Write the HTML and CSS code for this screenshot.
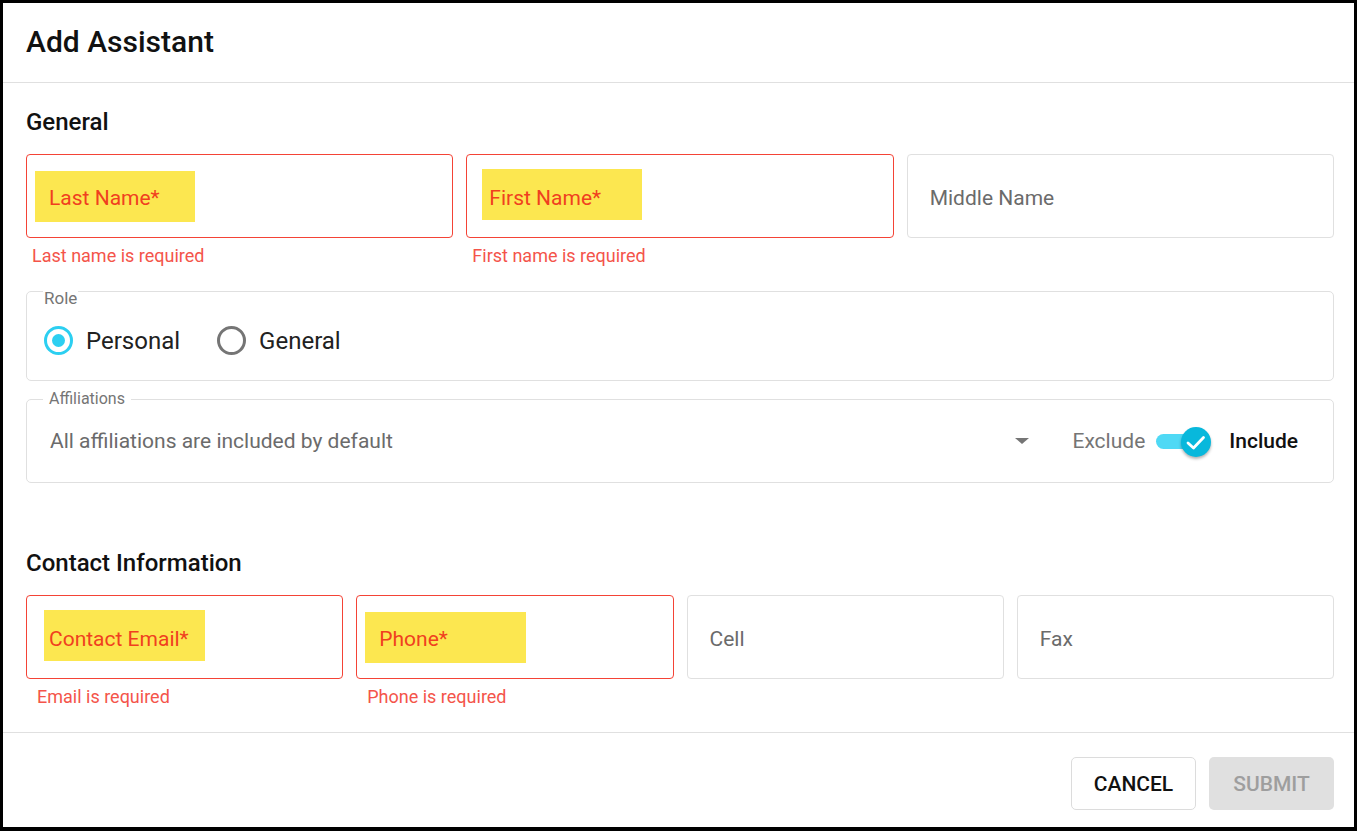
FILE: index.html
```html
<!DOCTYPE html>
<html lang="en">
<head>
<meta charset="utf-8">
<title>Add Assistant</title>
<link rel="stylesheet" href="styles.css">
</head>
<body>
<div class="dialog">
  <header class="dialog-header">
    <h1 class="dialog-title">Add Assistant</h1>
  </header>

  <main class="dialog-body">
    <h2 class="section-title section-title--first">General</h2>
    <div class="row row--3">
      <div class="field-group">
        <div class="field field--error">
          <span class="hl hl--a"></span>
          <span class="field-label">Last Name*</span>
        </div>
        <div class="field-error">Last name is required</div>
      </div>
      <div class="field-group">
        <div class="field field--error">
          <span class="hl hl--b"></span>
          <span class="field-label">First Name*</span>
        </div>
        <div class="field-error">First name is required</div>
      </div>
      <div class="field-group">
        <div class="field">
          <span class="field-label field-label--muted">Middle Name</span>
        </div>
      </div>
    </div>

    <div class="box box--role">
      <span class="box-label box-label--role">Role</span>
      <div class="radios">
        <label class="radio">
          <span class="radio-mark radio-mark--on"></span>
          <span class="radio-text">Personal</span>
        </label>
        <label class="radio">
          <span class="radio-mark"></span>
          <span class="radio-text">General</span>
        </label>
      </div>
    </div>

    <div class="box box--aff">
      <span class="box-label">Affiliations</span>
      <span class="aff-text">All affiliations are included by default</span>
      <span class="caret"></span>
      <span class="switch-off">Exclude</span>
      <span class="switch">
        <span class="switch-track"></span>
        <span class="switch-thumb">
          <svg width="30" height="30" viewBox="0 0 30 30"><polyline points="7,16 12.5,21 22.5,10.5" fill="none" stroke="#fff" stroke-width="2.8" stroke-linecap="round" stroke-linejoin="round"/></svg>
        </span>
      </span>
      <span class="switch-on">Include</span>
    </div>

    <h2 class="section-title section-title--second">Contact Information</h2>
    <div class="row row--4">
      <div class="field-group">
        <div class="field field--error">
          <span class="hl hl--c"></span>
          <span class="field-label">Contact Email*</span>
        </div>
        <div class="field-error field-error--wide">Email is required</div>
      </div>
      <div class="field-group">
        <div class="field field--error">
          <span class="hl hl--d"></span>
          <span class="field-label">Phone*</span>
        </div>
        <div class="field-error field-error--wide">Phone is required</div>
      </div>
      <div class="field-group">
        <div class="field">
          <span class="field-label field-label--muted">Cell</span>
        </div>
      </div>
      <div class="field-group">
        <div class="field">
          <span class="field-label field-label--muted">Fax</span>
        </div>
      </div>
    </div>
  </main>

  <footer class="dialog-footer">
    <button class="btn btn--outline" type="button">CANCEL</button>
    <button class="btn btn--disabled" type="button" disabled>SUBMIT</button>
  </footer>
</div>
</body>
</html>
```

FILE: styles.css
```css
* { box-sizing: border-box; }

html, body {
  margin: 0;
  padding: 0;
  background: #000;
}

body {
  padding: 3px 3px 4px 3px;
  font-family: Roboto, "Liberation Sans", Arial, sans-serif;
  color: #212121;
}

.dialog {
  background: #fff;
  width: 1351px;
  height: 824px;
  display: flex;
  flex-direction: column;
}

/* header */
.dialog-header {
  height: 80px;
  padding: 21px 23px 0;
  border-bottom: 1px solid #e0e0e0;
}

.dialog-title {
  margin: 0;
  font-size: 30px;
  line-height: 36px;
  font-weight: 500;
  color: #111;
}

/* body */
.dialog-body {
  padding: 0 20px 25px 23px;
  flex: 1;
}

.section-title {
  margin: 0;
  font-size: 24px;
  line-height: 28px;
  font-weight: 500;
  color: #111;
}
.section-title--first { margin-top: 25px; margin-bottom: 18px; }
.section-title--second { margin-top: 66px; margin-bottom: 18px; }

.row {
  display: grid;
  column-gap: 13px;
  height: 112px;
}
.row--3 { grid-template-columns: repeat(3, 1fr); }
.row--4 { grid-template-columns: repeat(4, 1fr); }

.field {
  position: relative;
  height: 84px;
  border: 1px solid #e0e0e0;
  border-radius: 4px;
  display: flex;
  align-items: center;
  padding-left: 22px;
  padding-top: 3px;
}
.field--error { border-color: #f44336; }

.field-label {
  position: relative;
  font-size: 21px;
  color: #f0401f;
}
.field-label--muted { color: #6b6b6b; }

/* marker highlight behind required labels */
.hl {
  position: absolute;
  height: 51px;
  background: #fce750;
}
.hl--a { left: 8px; top: 16px; width: 160px; }
.hl--b { left: 15px; top: 14px; width: 160px; }
.hl--c { left: 17px; top: 14px; width: 161px; }
.hl--d { left: 8px; top: 16px; width: 161px; }

.field-error {
  margin-top: 8px;
  margin-left: 6px;
  font-size: 18px;
  line-height: 20px;
  color: #f4544a;
}
.field-error--wide { margin-left: 11px; }

/* outlined groups */
.box {
  position: relative;
  border: 1px solid #e0e0e0;
  border-radius: 5px;
  margin-top: 25px;
}

.box-label {
  position: absolute;
  top: -10px;
  left: 16px;
  padding: 0 6px;
  background: #fff;
  font-size: 16px;
  line-height: 18px;
  color: #757575;
}
.box-label--role {
  top: -3px;
  left: 16px;
  padding: 0 1px;
  font-size: 17px;
}

.box--role {
  height: 90px;
  padding: 34px 17px 0;
}

.radios {
  display: flex;
  align-items: center;
  gap: 37px;
}

.radio {
  display: flex;
  align-items: center;
  gap: 13px;
}

.radio-mark {
  width: 29px;
  height: 29px;
  border-radius: 50%;
  border: 3px solid #757575;
  display: flex;
  align-items: center;
  justify-content: center;
}
.radio-mark--on { border-color: #2ccff1; }
.radio-mark--on::after {
  content: "";
  width: 13px;
  height: 13px;
  border-radius: 50%;
  background: #2ccff1;
}

.radio-text {
  font-size: 24px;
  line-height: 28px;
  color: #212121;
}

.box--aff {
  margin-top: 18px;
  height: 84px;
  display: flex;
  align-items: center;
  padding: 0 35px 0 23px;
}

.aff-text {
  flex: 1;
  font-size: 21px;
  color: #6b6b6b;
}

.caret {
  width: 0;
  height: 0;
  border-left: 7px solid transparent;
  border-right: 7px solid transparent;
  border-top: 6px solid #757575;
  margin-right: 43px;
}

.switch-off {
  font-size: 21px;
  color: #757575;
}

.switch {
  position: relative;
  width: 56px;
  height: 30px;
  margin-left: 10px;
  margin-right: 18px;
}

.switch-track {
  position: absolute;
  left: 1px;
  top: 8px;
  width: 47px;
  height: 15px;
  border-radius: 8px;
  background: #4fd9f5;
}

.switch-thumb {
  position: absolute;
  right: 0;
  top: 1px;
  width: 30px;
  height: 30px;
  border-radius: 50%;
  background: #08b8dc;
  box-shadow: 0 2px 3px rgba(0, 0, 0, 0.3);
}

.switch-thumb svg { display: block; }

.switch-on {
  font-size: 21px;
  font-weight: 500;
  color: #111;
}

/* footer */
.dialog-footer {
  border-top: 1px solid #e0e0e0;
  height: 95px;
  padding: 24px 20px 0 0;
  display: flex;
  justify-content: flex-end;
  align-items: flex-start;
  gap: 13px;
}

.btn {
  width: 125px;
  height: 53px;
  border-radius: 5px;
  font-family: Roboto, "Liberation Sans", Arial, sans-serif;
  font-size: 21px;
  font-weight: 500;
  padding: 0;
}

.btn--outline {
  background: #fff;
  border: 1px solid #dcdcdc;
  color: #111;
}

.btn--disabled {
  background: #e0e0e0;
  border: none;
  color: #9e9e9e;
}
```
